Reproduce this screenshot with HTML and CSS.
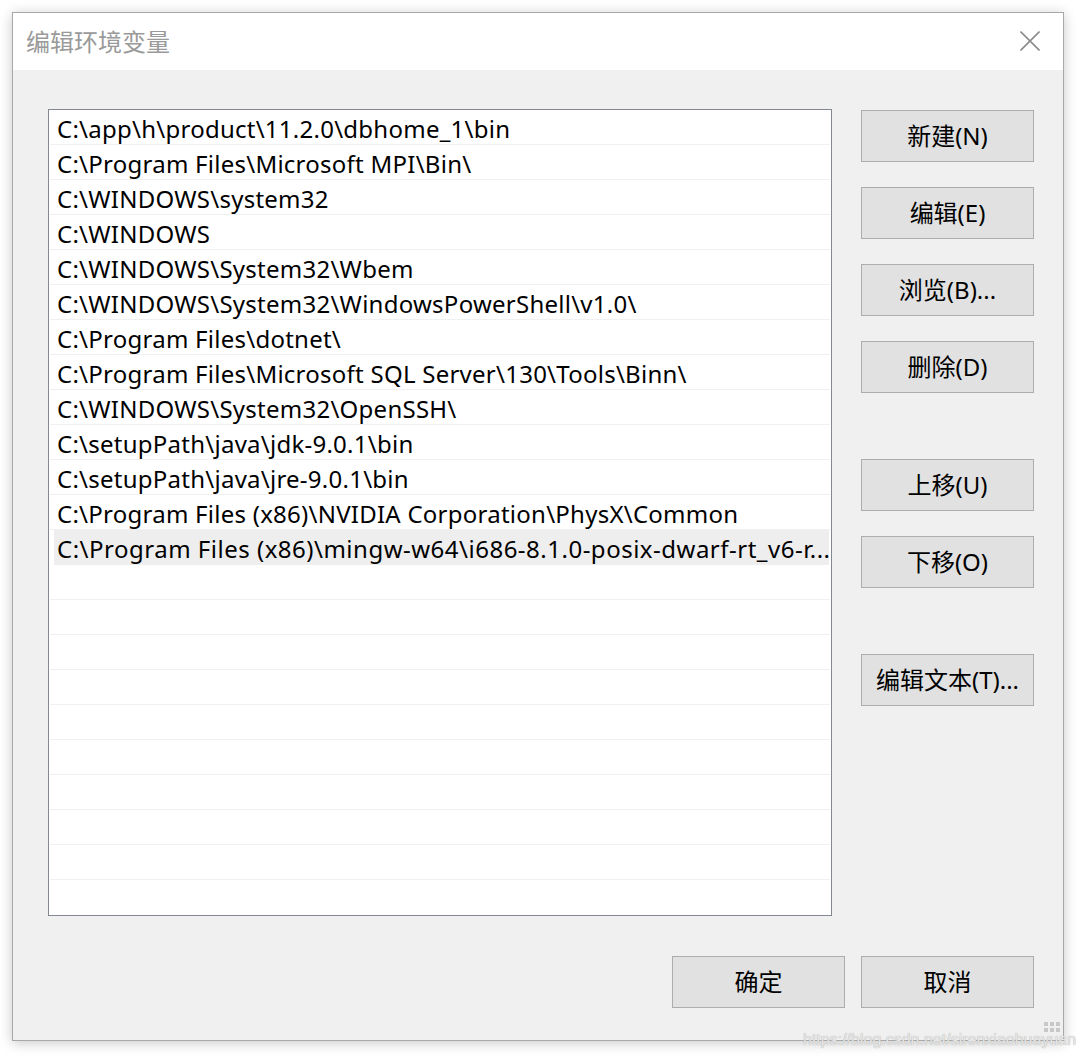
FILE: index.html
```html
<!DOCTYPE html>
<html>

<head>
  <meta charset="UTF-8">
  <title>编辑环境变量</title>
  <link rel="stylesheet" href="styles.css">
</head>

<body>
  <div class="window">
    <div class="title-bar">
      <span class="title">编辑环境变量</span>
      <svg class="close" width="20" height="20" viewBox="0 0 20 20">
        <path d="M0.5 0.5 L19.5 19.5 M19.5 0.5 L0.5 19.5" stroke="#8c8c8c" stroke-width="1.6" fill="none" />
      </svg>
    </div>
    <div class="content">
      <div class="main">
        <div class="list">
          <div class="row">C:\app\h\product\11.2.0\dbhome_1\bin</div>
          <div class="row">C:\Program Files\Microsoft MPI\Bin\</div>
          <div class="row">C:\WINDOWS\system32</div>
          <div class="row">C:\WINDOWS</div>
          <div class="row">C:\WINDOWS\System32\Wbem</div>
          <div class="row">C:\WINDOWS\System32\WindowsPowerShell\v1.0\</div>
          <div class="row">C:\Program Files\dotnet\</div>
          <div class="row">C:\Program Files\Microsoft SQL Server\130\Tools\Binn\</div>
          <div class="row">C:\WINDOWS\System32\OpenSSH\</div>
          <div class="row">C:\setupPath\java\jdk-9.0.1\bin</div>
          <div class="row">C:\setupPath\java\jre-9.0.1\bin</div>
          <div class="row">C:\Program Files (x86)\NVIDIA Corporation\PhysX\Common</div>
          <div class="row selected">C:\Program Files (x86)\mingw-w64\i686-8.1.0-posix-dwarf-rt_v6-r...</div>
          <div class="row"></div>
          <div class="row"></div>
          <div class="row"></div>
          <div class="row"></div>
          <div class="row"></div>
          <div class="row"></div>
          <div class="row"></div>
          <div class="row"></div>
          <div class="row"></div>
          <div class="row last"></div>
        </div>
        <div class="side">
          <div class="group">
            <button class="btn">新建(N)</button>
            <button class="btn">编辑(E)</button>
            <button class="btn">浏览(B)...</button>
            <button class="btn">删除(D)</button>
          </div>
          <div class="group">
            <button class="btn">上移(U)</button>
            <button class="btn">下移(O)</button>
          </div>
          <div class="group">
            <button class="btn">编辑文本(T)...</button>
          </div>
        </div>
      </div>
      <div class="footer">
        <button class="btn">确定</button>
        <button class="btn">取消</button>
      </div>
      <div class="grip">
        <i></i><i></i><i></i><i></i><i></i><i></i>
      </div>
    </div>
  </div>
  <div class="watermark">https://blog.csdn.net/sirenxiaohuayuan</div>
</body>

</html>
```

FILE: styles.css
```css
body {
  margin: 0;
  background-color: #ffffff;
  font-family: "Noto Sans", "Noto Sans CJK SC", sans-serif;
  width: 1084px;
  height: 1060px;
  position: relative;
  overflow: hidden;
}

.window {
  margin: 12px 0 0 12px;
  width: 1050px;
  height: 1027px;
  border: 1px solid #a8a8a8;
  box-shadow: 0 2px 12px rgba(0, 0, 0, 0.22);
  display: flex;
  flex-direction: column;
  background-color: #f0f0f0;
}

.title-bar {
  height: 57px;
  background-color: #ffffff;
  display: flex;
  align-items: center;
  justify-content: space-between;
  padding: 0 23px 0 13px;
}

.title {
  font-family: "Noto Sans CJK SC", sans-serif;
  font-size: 24px;
  color: #9a9a9a;
  margin-top: -2px;
}

.close {
  margin-top: -1px;
}

.content {
  flex: 1;
  padding: 39px 0 0 35px;
  position: relative;
}

.main {
  display: flex;
  gap: 29px;
}

.list {
  width: 782px;
  height: 805px;
  border: 1px solid #828790;
  background-color: #ffffff;
}

.row {
  height: 35px;
  box-sizing: border-box;
  border-bottom: 1px solid #f0f0f0;
  margin-left: 1px;
  margin-right: 1px;
  padding: 2px 0 0 7px;
  font-size: 24px;
  letter-spacing: 0.25px;
  line-height: 33px;
  color: #000000;
  white-space: nowrap;
  overflow: hidden;
}

.row.last {
  border-bottom: none;
}

.row.selected {
  padding-left: 3px;
  margin-left: 5px;
  margin-right: 2px;
  letter-spacing: 0.5px;
  background-color: #eeeeee;
  border-bottom-color: #eeeeee;
}

.side {
  display: flex;
  flex-direction: column;
  gap: 66px;
  padding-top: 1px;
}

.group {
  display: flex;
  flex-direction: column;
  gap: 25px;
}

.btn {
  width: 173px;
  height: 52px;
  border: 1px solid #adadad;
  background-color: #e1e1e1;
  font-family: "Noto Sans", "Noto Sans CJK SC", sans-serif;
  font-size: 24px;
  color: #000000;
  padding: 0 0 3px 0;
}

.footer {
  display: flex;
  justify-content: flex-end;
  gap: 16px;
  padding: 40px 29px 0 0;
}

.grip {
  position: absolute;
  right: 3px;
  bottom: 2px;
  width: 16px;
  height: 16px;
  display: grid;
  grid-template-columns: repeat(3, 4px);
  grid-template-rows: repeat(3, 4px);
  gap: 2px;
}

.grip i {
  background-color: #c8c8c8;
}

.grip i:nth-child(1) {
  grid-column: 3;
  grid-row: 1;
}

.grip i:nth-child(2) {
  grid-column: 2;
  grid-row: 2;
}

.grip i:nth-child(3) {
  grid-column: 3;
  grid-row: 2;
}

.watermark {
  position: absolute;
  left: 803px;
  top: 1031px;
  font-family: "Liberation Sans", sans-serif;
  font-size: 16px;
  color: #e6e6e6;
  text-shadow: 0 0 1px #a0a0a0;
  white-space: nowrap;
}
```
